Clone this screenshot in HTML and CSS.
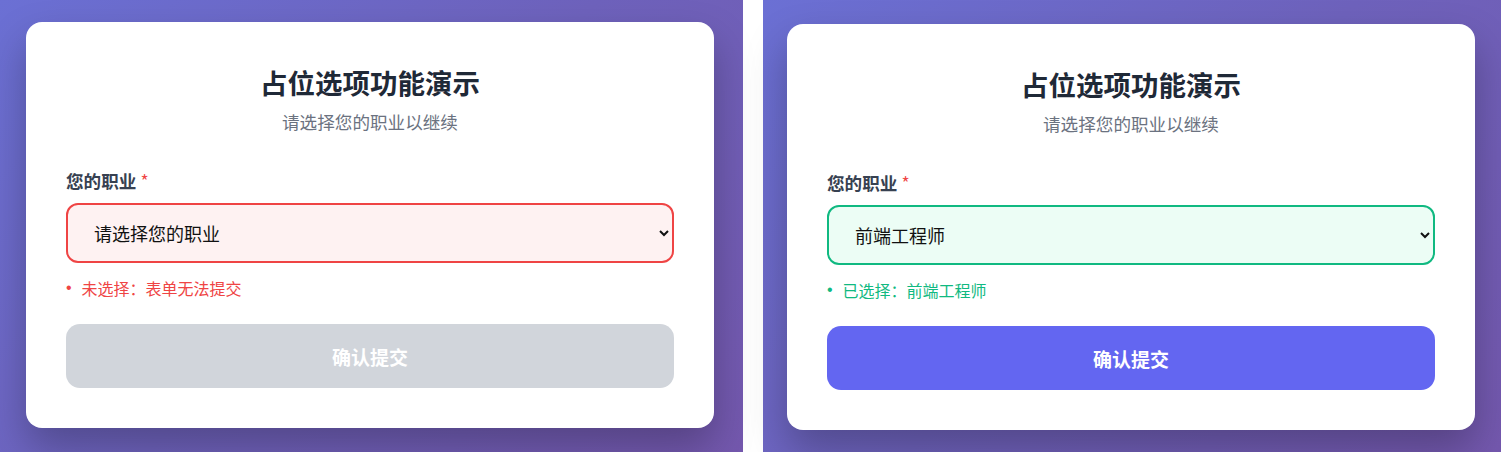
FILE: index.html
```html
<!DOCTYPE html>
<html lang="zh-CN">
<head>
  <meta charset="UTF-8">
  <meta name="viewport" content="width=device-width, initial-scale=1.0">
  <title>占位选项功能演示</title>
  <link rel="stylesheet" href="styles.css">
</head>
<body>
  <div class="demo">
    <!-- state 1: nothing chosen yet -->
    <section class="panel panel-empty">
      <div class="card">
        <h1>占位选项功能演示</h1>
        <p class="subtitle">请选择您的职业以继续</p>
        <form class="job-form">
          <label for="job-a">您的职业 <span class="required">*</span></label>
          <select id="job-a" class="job-select is-empty" required>
            <option value="" selected>请选择您的职业</option>
            <option value="frontend">前端工程师</option>
            <option value="backend">后端工程师</option>
            <option value="designer">UI 设计师</option>
            <option value="pm">产品经理</option>
          </select>
          <div class="status status-error"><span class="dot">•</span><span>未选择：表单无法提交</span></div>
          <button type="submit" class="button" disabled>确认提交</button>
        </form>
      </div>
    </section>

    <!-- state 2: a job is chosen -->
    <section class="panel panel-selected">
      <div class="card">
        <h1>占位选项功能演示</h1>
        <p class="subtitle">请选择您的职业以继续</p>
        <form class="job-form">
          <label for="job-b">您的职业 <span class="required">*</span></label>
          <select id="job-b" class="job-select is-valid" required>
            <option value="">请选择您的职业</option>
            <option value="frontend" selected>前端工程师</option>
            <option value="backend">后端工程师</option>
            <option value="designer">UI 设计师</option>
            <option value="pm">产品经理</option>
          </select>
          <div class="status status-ok"><span class="dot">•</span><span>已选择：前端工程师</span></div>
          <button type="submit" class="button">确认提交</button>
        </form>
      </div>
    </section>
  </div>
</body>
</html>
```

FILE: styles.css
```css
body {
  font-family: "Noto Sans CJK SC", "Noto Sans", sans-serif;
  margin: 0;
  padding: 0;
  background-color: #ffffff;
}
.demo {
  display: flex;
  gap: 20px;
  height: 452px;
  overflow: hidden;
}
.panel {
  background: linear-gradient(135deg, #6b70d4 0%, #6e62bc 50%, #7458ae 100%);
  height: 452px;
  box-sizing: border-box;
}
.panel-empty {
  width: 743px;
  padding: 22px 0 0 26px;
}
.panel-selected {
  flex: 1;
  padding: 24px 0 0 24px;
}
.card {
  width: 688px;
  box-sizing: border-box;
  padding: 40px;
  background-color: white;
  border-radius: 16px;
  box-shadow: 0 20px 40px rgba(0, 0, 0, 0.26);
}
h1 {
  margin: 0;
  text-align: center;
  font-size: 27.5px;
  line-height: 40px;
  font-weight: 700;
  color: #1f2937;
}
.subtitle {
  margin: 8px 0 0;
  text-align: center;
  font-size: 1.1rem;
  line-height: 24px;
  color: #6b7280;
}
.job-form {
  display: flex;
  flex-direction: column;
  margin-top: 35px;
}
label {
  height: 24px;
  font-size: 1.1rem;
  line-height: 24px;
  font-weight: 700;
  color: #374151;
  margin-bottom: 10px;
}
.required {
  color: #ef4444;
  font-weight: 400;
}
.job-select {
  height: 60px;
  box-sizing: border-box;
  padding: 0 16px 0 22px;
  border: 2px solid #d1d5db;
  border-radius: 12px;
  font-family: inherit;
  font-size: 18px;
  color: #111;
}
.job-select.is-empty {
  border-color: #ef4444;
  background-color: #fef2f2;
}
.job-select.is-valid {
  border-color: #10b981;
  background-color: #ecfdf5;
}
.status {
  display: flex;
  align-items: center;
  height: 22px;
  margin-top: 14px;
  font-size: 16px;
  line-height: 22px;
}
.status .dot {
  font-family: "Liberation Sans", sans-serif;
  margin: 0 10px 0 0;
}
.status-error {
  color: #ef4444;
}
.status-ok {
  color: #10b981;
}
.button {
  margin-top: 25px;
  height: 64px;
  background-color: #6366f1;
  color: white;
  border: none;
  border-radius: 14px;
  font-family: inherit;
  font-size: 19px;
  font-weight: 700;
  cursor: pointer;
  text-align: center;
}
.button:disabled {
  background-color: #d1d5db;
  cursor: not-allowed;
}
```
